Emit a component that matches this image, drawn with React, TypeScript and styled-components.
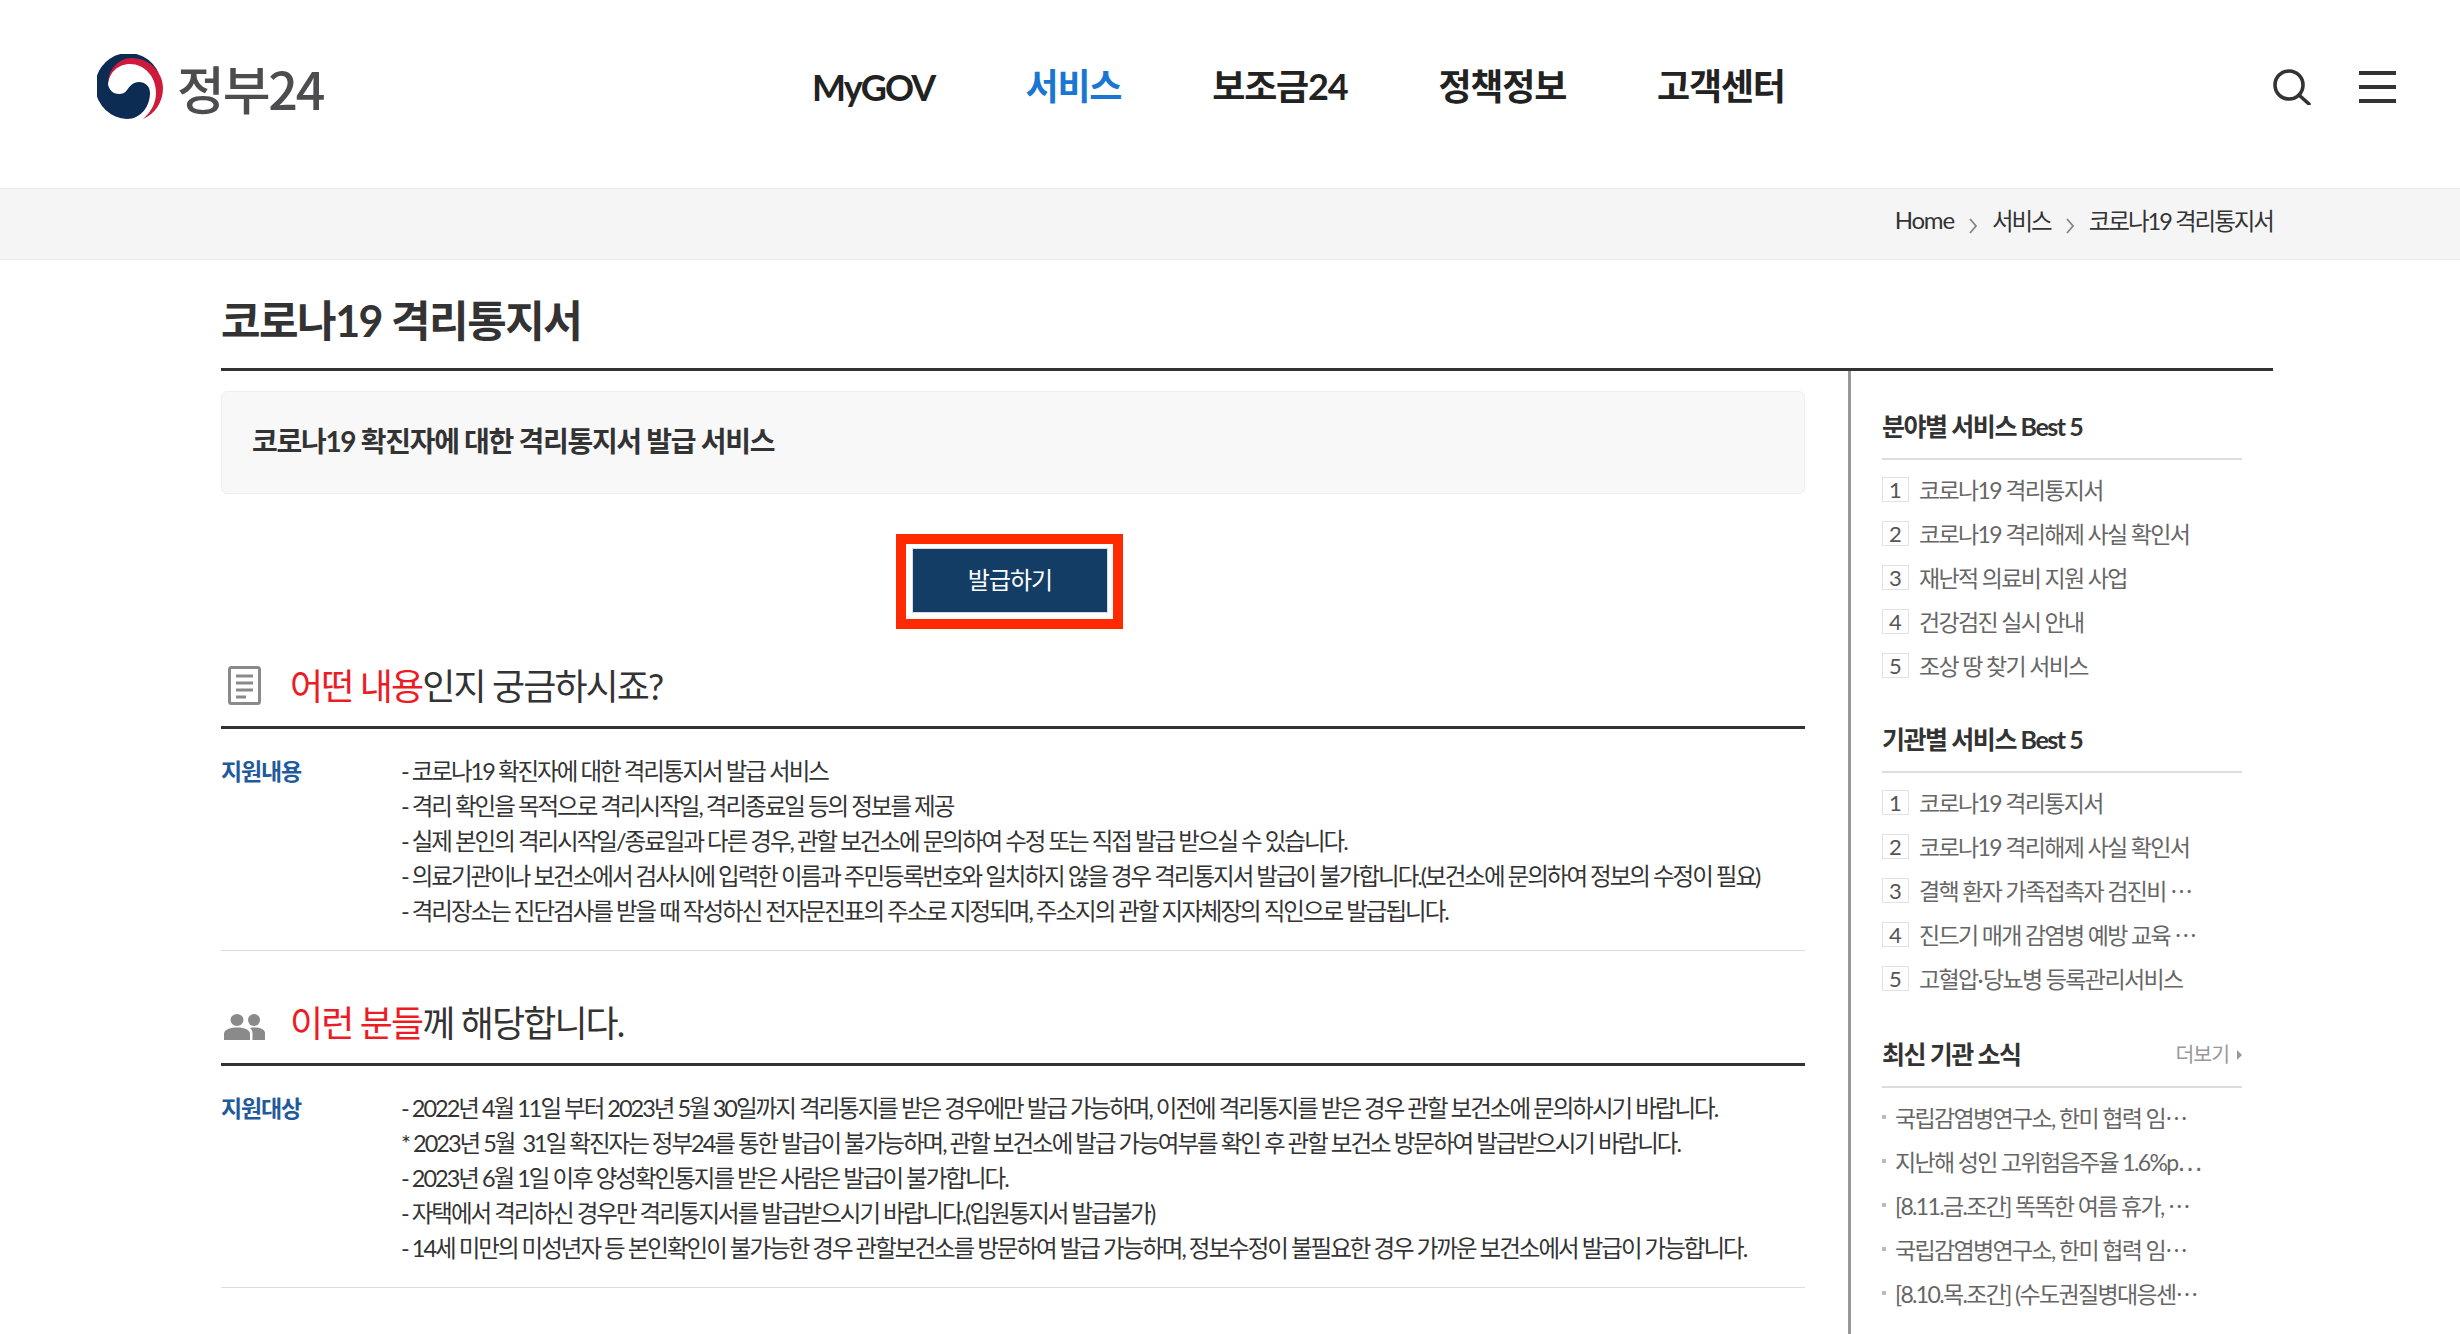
import React from "react";
import styled, { createGlobalStyle } from "styled-components";

const GlobalStyle = createGlobalStyle`
  html, body {
    margin: 0;
    padding: 0;
    background: #fff;
    overflow: hidden;
  }
  * {
    box-sizing: border-box;
  }
  body {
    font-family: "Lato", "Noto Sans CJK KR", sans-serif;
    color: #333;
  }
`;

const Page = styled.div`
  width: 2460px;
  height: 1334px;
  overflow: hidden;
`;

const Header = styled.header`
  display: flex;
  align-items: center;
  height: 188px;
  padding: 0 64px 14px 97px;
`;

const Logo = styled.a`
  display: flex;
  align-items: center;
  gap: 14px;
  width: 715px;
  font-family: "Noto Sans CJK KR", sans-serif;
  font-size: 52px;
  font-weight: 500;
  letter-spacing: -2.2px;
  color: #4d4d4f;
  svg {
    width: 66px;
    height: 66px;
  }
`;

const Nav = styled.nav`
  display: flex;
  align-items: center;
  gap: 91px;
  flex: 1;
  padding-bottom: 6px;
`;

const NavItem = styled.a<{ $active?: boolean; $latin?: boolean }>`
  padding-top: ${(p) => (p.$latin ? "5px" : "0")};
  font-size: 36px;
  font-weight: 700;
  letter-spacing: ${(p) => (p.$latin ? "-1.9px" : "-1.2px")};
  color: ${(p) => (p.$active ? "#1b76d2" : "#222")};
`;

const HeaderIcons = styled.div`
  display: flex;
  align-items: center;
  gap: 48px;
`;

const Crumbs = styled.div`
  display: flex;
  align-items: center;
  justify-content: flex-end;
  height: 72px;
  padding: 0 187px 9px 0;
  background: #f6f5f6;
  border-top: 1px solid #ececec;
  border-bottom: 1px solid #e8e8e8;
  font-size: 23.5px;
  letter-spacing: -2px;
  color: #333;
  gap: 14px;
`;

const CrumbHome = styled.span`
  font-size: 24px;
  letter-spacing: -1.2px;
`;

const Chevron = styled.svg`
  width: 10px;
  height: 16px;
  margin-top: 12px;
`;

const Wrap = styled.div`
  width: 2052px;
  margin-left: 221px;
`;

const Title = styled.h1`
  margin: 0;
  height: 111px;
  padding-top: 33px;
  font-size: 43px;
  line-height: 56px;
  font-weight: 700;
  letter-spacing: -1.5px;
  color: #333;
  border-bottom: 3px solid #333;
`;

const Columns = styled.div`
  display: flex;
`;

const Main = styled.main`
  width: 1584px;
  flex: none;
  padding-top: 20px;
`;

const Intro = styled.div`
  display: flex;
  align-items: center;
  height: 103px;
  padding: 0 0 6px 30px;
  background: #f8f8f8;
  border: 1px solid #eee;
  border-radius: 6px;
  font-size: 28px;
  font-weight: 700;
  letter-spacing: -1.3px;
  color: #333;
`;

const IssueRow = styled.div`
  display: flex;
  justify-content: center;
  margin-top: 40px;
  padding-right: 7px;
`;

const IssueFrame = styled.div`
  padding: 4px 5px 6px 6px;
  border: 10px solid #ff2a00;
  background: #fff;
`;

const IssueButton = styled.button`
  display: block;
  width: 196px;
  height: 65px;
  padding: 0 0 4px;
  border: 1px solid #d4dce4;
  background: #143d66;
  color: #fff;
  font-family: inherit;
  font-size: 24px;
  letter-spacing: -1px;
`;

const SectionHead = styled.h2<{ $top: number }>`
  display: flex;
  align-items: center;
  gap: 25px;
  margin: ${(p) => p.$top}px 0 0;
  height: 100px;
  padding: 12px 0 0 3px;
  border-bottom: 3px solid #333;
  font-size: 36px;
  font-weight: 400;
  letter-spacing: -1.9px;
  color: #333;
  em {
    font-style: normal;
    color: #ed1c24;
  }
`;

const IconSlot = styled.span<{ $drop?: number }>`
  display: flex;
  justify-content: center;
  width: 41px;
  flex: none;
  padding-top: ${(p) => p.$drop ?? 0}px;
`;

const InfoRow = styled.div`
  display: flex;
  padding: 25px 0 21px;
  border-bottom: 1px solid #ddd;
`;

const InfoLabel = styled.div`
  width: 180px;
  flex: none;
  font-size: 23px;
  line-height: 35px;
  font-weight: 700;
  letter-spacing: -1.2px;
  color: #1f5a9c;
`;

const InfoLines = styled.div`
  font-size: 23.5px;
  line-height: 35px;
  letter-spacing: -2px;
  color: #333;
  white-space: pre;
`;

const Side = styled.aside`
  width: 424px;
  height: 964px;
  flex: none;
  margin-left: 43px;
  padding: 0 30px 0 31px;
  border-left: 3px solid #999;
`;

const SideHead = styled.div<{ $top: number }>`
  display: flex;
  align-items: center;
  justify-content: space-between;
  height: 60px;
  margin-top: ${(p) => p.$top}px;
  padding-bottom: 8px;
  border-bottom: 2px solid #ddd;
  font-size: 25px;
  font-weight: 700;
  letter-spacing: -1.45px;
  color: #333;
`;

const More = styled.span`
  display: flex;
  align-items: center;
  gap: 8px;
  font-size: 20.5px;
  font-weight: 400;
  letter-spacing: -1px;
  color: #999;
  i {
    width: 0;
    height: 0;
    margin-top: 3px;
    border-left: 5px solid #999;
    border-top: 5px solid transparent;
    border-bottom: 5px solid transparent;
  }
`;

const SideList = styled.ul`
  list-style: none;
  margin: 7px 0 0;
  padding: 0;
`;

const SideItem = styled.li`
  display: flex;
  align-items: center;
  height: 44px;
  font-size: 23px;
  letter-spacing: -1.65px;
  color: #666;
  white-space: pre;
`;

const Rank = styled.span`
  display: flex;
  align-items: center;
  justify-content: center;
  width: 27px;
  height: 25px;
  margin-right: 10px;
  border: 1px solid #e2e2e2;
  font-size: 22px;
  letter-spacing: 0;
  color: #555;
`;

const Bullet = styled.span`
  width: 4px;
  height: 4px;
  margin-right: 9px;
  background: #bbb;
`;

const Sep = () => (
  <Chevron viewBox="0 0 10 16">
    <path d="M2 1l6 7-6 7" fill="none" stroke="#8a827c" strokeWidth="1.8" />
  </Chevron>
);

const best1 = ["코로나19 격리통지서", "코로나19 격리해제 사실 확인서", "재난적 의료비 지원 사업", "건강검진 실시 안내", "조상 땅 찾기 서비스"];
const best2 = ["코로나19 격리통지서", "코로나19 격리해제 사실 확인서", "결핵 환자 가족접촉자 검진비 ⋯", "진드기 매개 감염병 예방 교육 ⋯", "고혈압·\u2009당뇨병 등록관리서비스"];
const news = ["국립감염병연구소, 한미 협력 임⋯", "지난해 성인 고위험음주율 1.6%p⋯", "[8.11.금.조간] 똑똑한 여름 휴가, ⋯", "국립감염병연구소, 한미 협력 임⋯", "[8.10.목.조간] (수도권질병대응센⋯"];

const contentLines = [
  "- 코로나19 확진자에 대한 격리통지서 발급 서비스",
  "- 격리 확인을 목적으로 격리시작일, 격리종료일 등의 정보를 제공",
  "- 실제 본인의 격리시작일/종료일과 다른 경우, 관할 보건소에 문의하여 수정 또는 직접 발급 받으실 수 있습니다.",
  "- 의료기관이나 보건소에서 검사시에 입력한 이름과 주민등록번호와 일치하지 않을 경우 격리통지서 발급이 불가합니다.(보건소에 문의하여 정보의 수정이 필요)",
  "- 격리장소는 진단검사를 받을 때 작성하신 전자문진표의 주소로 지정되며, 주소지의 관할 지자체장의 직인으로 발급됩니다.",
];

const targetLines = [
  "- 2022년 4월 11일 부터 2023년 5월 30일까지 격리통지를 받은 경우에만 발급 가능하며, 이전에 격리통지를 받은 경우 관할 보건소에 문의하시기 바랍니다.",
  "* 2023년 5월  31일 확진자는 정부24를 통한 발급이 불가능하며, 관할 보건소에 발급 가능여부를 확인 후 관할 보건소 방문하여 발급받으시기 바랍니다.",
  "- 2023년 6월 1일 이후 양성확인통지를 받은 사람은 발급이 불가합니다.",
  "- 자택에서 격리하신 경우만 격리통지서를 발급받으시기 바랍니다.(입원통지서 발급불가)",
  "- 14세 미만의 미성년자 등 본인확인이 불가능한 경우 관할보건소를 방문하여 발급 가능하며, 정보수정이 불필요한 경우 가까운 보건소에서 발급이 가능합니다.",
];

export default function App() {
  return (
    <Page>
      <GlobalStyle />
      <Header>
        <Logo>
          <svg viewBox="0 0 66 66">
            <path d="M62 20A33 33 0 1 0 30 65C44 65 53 52 53 39C53 32 48 28 42 28C36 28 33 32 30 36C28 39 25 40 22 40C16 40 12 36 11 30C13 16 22 6 34 6C46 6 54 12 62 20Z" fill="#0c2c54" />
            <path d="M11 30C11 15 22 4 35 4C52 4 66 18 66 34C66 48 58 60 46 65C54 58 59 49 59 39C59 22 47 10 33 10C21 10 12 19 11 30Z" fill="#ce1b3c" />
          </svg>
          정부24
        </Logo>
        <Nav>
          <NavItem $latin>MyGOV</NavItem>
          <NavItem $active>서비스</NavItem>
          <NavItem>보조금24</NavItem>
          <NavItem>정책정보</NavItem>
          <NavItem>고객센터</NavItem>
        </Nav>
        <HeaderIcons>
          <svg width="38" height="36" viewBox="0 0 38 36" fill="none" stroke="#333" strokeWidth="3.600">
            <circle cx="16" cy="16" r="14" />
            <path d="M26 26l10 9" strokeLinecap="round" />
          </svg>
          <svg width="37" height="32" viewBox="0 0 37 32" fill="#333">
            <rect y="0" width="37" height="4" />
            <rect y="14" width="37" height="4" />
            <rect y="28" width="37" height="4" />
          </svg>
        </HeaderIcons>
      </Header>

      <Crumbs>
        <CrumbHome>Home</CrumbHome>
        <Sep />
        <span>서비스</span>
        <Sep />
        <span>코로나19 격리통지서</span>
      </Crumbs>

      <Wrap>
        <Title>코로나19 격리통지서</Title>
        <Columns>
          <Main>
            <Intro>코로나19 확진자에 대한 격리통지서 발급 서비스</Intro>
            <IssueRow>
              <IssueFrame>
                <IssueButton>발급하기</IssueButton>
              </IssueFrame>
            </IssueRow>
            <SectionHead $top={0}>
              <IconSlot $drop={4}>
                <svg width="33" height="39" viewBox="0 0 33 39" fill="none">
                  <rect x="1.500" y="1.500" width="30" height="36" rx="2" stroke="#8a8a8a" strokeWidth="3" />
                  <path d="M8 10h17M8 17h17M8 24h17M8 31h10" stroke="#8a8a8a" strokeWidth="3" />
                </svg>
              </IconSlot>
              <span>
                <em>어떤 내용</em>인지 궁금하시죠?
              </span>
            </SectionHead>
            <InfoRow>
              <InfoLabel>지원내용</InfoLabel>
              <InfoLines>
                {contentLines.map((l, i) => (
                  <div key={i}>{l}</div>
                ))}
              </InfoLines>
            </InfoRow>
            <SectionHead $top={15}>
              <IconSlot $drop={12}>
                <svg width="41" height="26" viewBox="0 0 41 26" fill="#8a8a8a">
                  <ellipse cx="13" cy="6" rx="6.500" ry="6" />
                  <ellipse cx="30" cy="6" rx="6" ry="6" />
                  <path d="M0 26v-6c0-4 5-6.500 13-6.500s13 2.500 13 6.500v6z" />
                  <path d="M28.500 26v-7c0-2-1-3.500-2.500-5 1.500-.4 3-.5 4.500-.5 6 0 10.500 2 10.500 5.500v7z" />
                </svg>
              </IconSlot>
              <span>
                <em>이런 분들</em>께 해당합니다.
              </span>
            </SectionHead>
            <InfoRow>
              <InfoLabel>지원대상</InfoLabel>
              <InfoLines>
                {targetLines.map((l, i) => (
                  <div key={i}>{l}</div>
                ))}
              </InfoLines>
            </InfoRow>
          </Main>
          <Side>
            <SideHead $top={29}>분야별 서비스 Best 5</SideHead>
            <SideList>
              {best1.map((t, i) => (
                <SideItem key={i}>
                  <Rank>{i + 1}</Rank>
                  {t}
                </SideItem>
              ))}
            </SideList>
            <SideHead $top={26}>기관별 서비스 Best 5</SideHead>
            <SideList>
              {best2.map((t, i) => (
                <SideItem key={i}>
                  <Rank>{i + 1}</Rank>
                  {t}
                </SideItem>
              ))}
            </SideList>
            <SideHead $top={28}>
              최신 기관 소식
              <More>
                더보기
                <i />
              </More>
            </SideHead>
            <SideList>
              {news.map((t, i) => (
                <SideItem key={i}>
                  <Bullet />
                  {t}
                </SideItem>
              ))}
            </SideList>
          </Side>
        </Columns>
      </Wrap>
    </Page>
  );
}
